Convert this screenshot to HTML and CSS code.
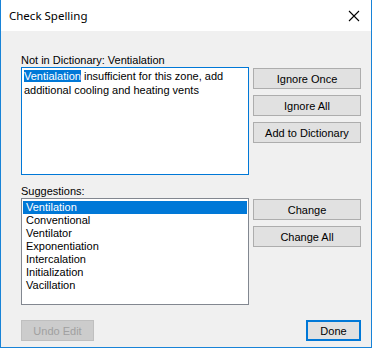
FILE: index.html
```html
<!DOCTYPE html>
<html lang="en">
<head>
  <meta charset="UTF-8">
  <title>Check Spelling</title>
  <link rel="stylesheet" href="styles.css">
</head>
<body>
  <div class="window">
    <div class="titlebar">
      <span class="title">Check Spelling</span>
      <svg class="close" width="12" height="12" viewBox="0 0 12 12">
        <path d="M1 1 L11 11 M11 1 L1 11" stroke="#000" stroke-width="1.1" fill="none"/>
      </svg>
    </div>

    <div class="content">
      <!-- Word not found -->
      <div class="section">
        <div class="left">
          <div class="label">Not in Dictionary: Ventialation</div>
          <div class="box textbox"><span class="sel">Ventialation</span><span class="rest"> insufficient for this zone, add additional cooling and heating vents</span></div>
        </div>
        <div class="actions">
          <button class="btn">Ignore Once</button>
          <button class="btn">Ignore All</button>
          <button class="btn">Add to Dictionary</button>
        </div>
      </div>

      <!-- Suggestions -->
      <div class="section suggestions">
        <div class="left">
          <div class="label">Suggestions:</div>
          <ul class="box listbox">
            <li class="selected">Ventilation</li>
            <li>Conventional</li>
            <li>Ventilator</li>
            <li>Exponentiation</li>
            <li>Intercalation</li>
            <li>Initialization</li>
            <li>Vacillation</li>
          </ul>
        </div>
        <div class="actions">
          <button class="btn">Change</button>
          <button class="btn">Change All</button>
        </div>
      </div>

      <div class="footer">
        <button class="btn undo" disabled>Undo Edit</button>
        <button class="btn done">Done</button>
      </div>
    </div>
  </div>
</body>
</html>
```

FILE: styles.css
```css
* {
  box-sizing: border-box;
}
body {
  margin: 0;
  font-family: 'Liberation Sans', Arial, sans-serif;
  font-size: 11px;
  color: #000;
  background: #fff;
}
.window {
  width: 372px;
  height: 348px;
  border: 1px solid #1883d7;
  border-top: none;
  display: flex;
  flex-direction: column;
  background-color: #f0f0f0;
}
.titlebar {
  height: 31px;
  background-color: #fff;
  display: flex;
  align-items: center;
  justify-content: space-between;
  padding: 0 11px 0 8px;
}
.title {
  font-family: 'Noto Sans', 'Segoe UI', sans-serif;
  font-size: 11.5px;
  color: #000;
}
.content {
  flex: 1;
  padding: 22px 10px 0 20px;
}
.section {
  display: flex;
  gap: 4px;
}
.suggestions {
  margin-top: 9px;
}
.left {
  width: 228px;
}
.label {
  height: 14px;
  line-height: 14px;
}
.box {
  background-color: #fff;
  border: 1px solid #828790;
}
.textbox {
  height: 108px;
  border-color: #0078d7;
  padding: 1px 2px;
  line-height: 14px;
}
.sel {
  background-color: #0078d7;
  color: #fff;
}
.listbox {
  list-style: none;
  margin: 0;
  height: 107px;
  padding: 2px 1px;
}
.listbox li {
  height: 13px;
  line-height: 13px;
  padding-left: 3px;
}
.listbox li.selected {
  background-color: #0078d7;
  color: #fff;
}
.actions {
  width: 108px;
  padding-top: 15px;
  display: flex;
  flex-direction: column;
  gap: 6px;
}
.btn {
  font-family: 'Liberation Sans', Arial, sans-serif;
  font-size: 11px;
  color: #000;
  height: 21px;
  width: 108px;
  padding: 0;
  background-color: #e1e1e1;
  border: 1px solid #adadad;
}
.footer {
  display: flex;
  justify-content: space-between;
  margin-top: 15px;
}
.btn.undo {
  width: 73px;
  background-color: #cccccc;
  border-color: #bfbfbf;
  color: #a0a0a0;
}
.btn.done {
  width: 55px;
  border: 2px solid #0078d7;
}
```
